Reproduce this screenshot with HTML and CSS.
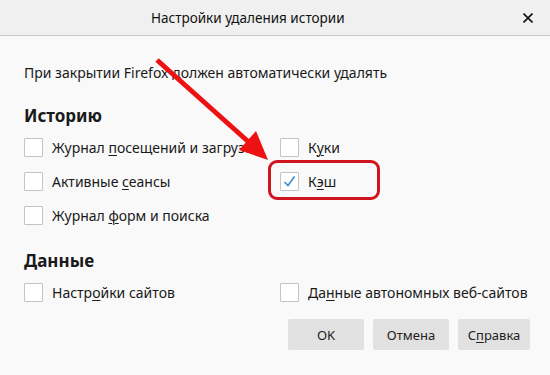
FILE: index.html
```html
<!DOCTYPE html>
<html>
<head>
    <title>Настройки удаления истории</title>
    <link rel="stylesheet" href="styles.css">
</head>
<body>
    <div class="titlebar">
        <span class="title">Настройки удаления истории</span>
        <span class="close">
            <svg width="10" height="10" viewBox="0 0 10 10"><path d="M0.5 0.5 L9.5 9.5 M9.5 0.5 L0.5 9.5" stroke="#111" stroke-width="1.6"/></svg>
        </span>
    </div>

    <div class="dialog">
        <p class="intro">При закрытии Firefox должен автоматически удалять</p>

        <h2 class="section">Историю</h2>
        <div class="grid">
            <div class="col">
                <label class="row"><span class="box"></span><span class="txt">Журнал <u>п</u>осещений и загрузок</span></label>
                <label class="row"><span class="box"></span><span class="txt">Активные <u>с</u>еансы</span></label>
                <label class="row"><span class="box"></span><span class="txt">Журнал <u>ф</u>орм и поиска</span></label>
            </div>
            <div class="col">
                <label class="row"><span class="box"></span><span class="txt">К<u>у</u>ки</span></label>
                <label class="row"><span class="box checked">
                    <svg width="17" height="17" viewBox="0 0 17 17"><path d="M3.5 9 L7 12.5 L13.5 3.5" fill="none" stroke="#3b8ed0" stroke-width="1.6"/></svg>
                </span><span class="txt">К<u>э</u>ш</span></label>
            </div>
        </div>

        <h2 class="section second">Данные</h2>
        <div class="grid">
            <div class="col">
                <label class="row"><span class="box"></span><span class="txt">Настр<u>о</u>йки сайтов</span></label>
            </div>
            <div class="col">
                <label class="row"><span class="box"></span><span class="txt">Да<u>н</u>ные автономных веб-сайтов</span></label>
            </div>
        </div>

        <div class="buttons">
            <button class="btn ok">OK</button>
            <button class="btn">Отмена</button>
            <button class="btn help">С<u>п</u>равка</button>
        </div>
    </div>

    <!-- Пометки поверх окна: стрелка и рамка вокруг "Кэш" -->
    <div class="highlight"></div>
    <svg class="arrow" width="550" height="375" viewBox="0 0 550 375">
        <line x1="157" y1="60" x2="252" y2="145" stroke="#ee1111" stroke-width="5"/>
        <polygon points="268,160 239,150 256,131" fill="#ee1111"/>
    </svg>
</body>
</html>
```

FILE: styles.css
```css
body {
    margin: 0;
    background-color: #f9f9f9;
    font-family: "Noto Sans", "Open Sans", sans-serif;
    color: #1a1a1a;
    position: relative;
    overflow: hidden;
    width: 550px;
    height: 375px;
}
.titlebar {
    height: 35px;
    background-color: #f0f0f0;
    border-bottom: 1px solid #c9c9c9;
    display: flex;
    align-items: center;
    position: relative;
}
.title {
    font-size: 13.5px;
    margin-left: 151px;
    color: #111;
}
.close {
    margin-left: auto;
    margin-right: 17px;
    display: flex;
}
.dialog {
    width: 506px;
    padding-left: 24px;
    overflow: hidden;
}
.intro {
    margin: 27px 0 0 0;
    font-size: 14px;
    line-height: 20px;
}
.section {
    margin: 22px 0 0 0;
    font-size: 17px;
    font-weight: bold;
    line-height: 22px;
}
.section.second {
    margin-top: 18px;
}
.grid {
    display: grid;
    grid-template-columns: 256px 1fr;
    margin-top: 3px;
}
.col {
    display: flex;
    flex-direction: column;
    overflow: hidden;
}
.row {
    display: flex;
    align-items: center;
    height: 34px;
    white-space: nowrap;
    font-size: 14px;
}
.box {
    width: 17px;
    height: 17px;
    flex: none;
    border: 1px solid #c4c4c4;
    background-color: #fff;
    border-radius: 1px;
    display: flex;
}
.txt {
    margin-left: 9px;
}
u {
    text-decoration-thickness: 1px;
    text-underline-offset: 2px;
}
.buttons {
    display: flex;
    justify-content: flex-end;
    gap: 9px;
    margin-top: 10px;
}
.btn {
    width: 76px;
    height: 31px;
    border: none;
    background-color: #e1e1e1;
    border-radius: 2px;
    font-family: "Noto Sans", "Open Sans", sans-serif;
    font-size: 13px;
    color: #222;
    padding: 0;
}
.btn.help {
    width: 72px;
}
.highlight {
    position: absolute;
    left: 268px;
    top: 160px;
    width: 106px;
    height: 34px;
    border: 3px solid #d0141e;
    border-radius: 9px;
}
.arrow {
    position: absolute;
    left: 0;
    top: 0;
}
```
